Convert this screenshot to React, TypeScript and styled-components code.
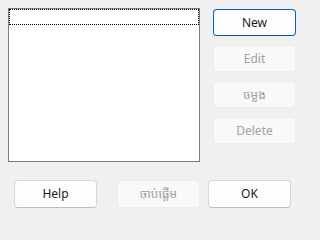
import React from 'react';
import styled, { createGlobalStyle } from 'styled-components';

const GlobalStyle = createGlobalStyle`
  html, body {
    margin: 0;
    padding: 0;
    background: #f0f0f0;
  }
`;

const Dialog = styled.div`
  width: 305px;
  height: 222px;
  box-sizing: border-box;
  padding: 8px 0 0 8px;
  background: #f0f0f0;
  font-family: "Segoe UI", "Noto Sans", "Noto Sans Khmer", "Khmer OS", sans-serif;
  font-size: 12px;
  display: flex;
  flex-direction: column;
  gap: 18px;
`;

const TopRow = styled.div`
  display: flex;
  align-items: flex-start;
  gap: 13px;
`;

const ListBox = styled.div`
  width: 192px;
  height: 154px;
  box-sizing: border-box;
  border: 1px solid #7a7a7a;
  background: #ffffff;
`;

const FocusItem = styled.div`
  height: 16px;
  box-sizing: border-box;
  border: 1px dotted #000000;
`;

const SideColumn = styled.div`
  display: flex;
  flex-direction: column;
  gap: 9px;
  padding-top: 1px;
`;

const Button = styled.button<{ $primary?: boolean; $offset?: number; $tall?: boolean }>`
  width: 83px;
  height: ${(p) => (p.$tall ? 28 : 27)}px;
  box-sizing: border-box;
  margin: 0 0 0 ${(p) => p.$offset ?? 0}px;
  padding: 0 0 1px;
  border-radius: 4px;
  font-family: inherit;
  font-size: 12px;
  color: #1a1a1a;
  background: #fdfdfd;
  border: 1px solid ${(p) => (p.$primary ? '#0067c0' : '#d5d5d5')};
  border-bottom-color: ${(p) => (p.$primary ? '#005aa8' : '#bdbdbd')};
  display: flex;
  align-items: center;
  justify-content: center;
  cursor: default;

  &:disabled {
    background: #f9f9f9;
    border-color: #ececec;
    color: #a0a0a0;
  }
`;

const BottomRow = styled.div`
  display: flex;
  padding-left: 6px;
`;

export default function App() {
  return (
    <>
      <GlobalStyle />
      <Dialog>
        <TopRow>
          <ListBox>
            <FocusItem />
          </ListBox>
          <SideColumn>
            <Button $primary>New</Button>
            <Button disabled>Edit</Button>
            <Button disabled>ចម្លង</Button>
            <Button disabled>Delete</Button>
          </SideColumn>
        </TopRow>
        <BottomRow>
          <Button $tall>Help</Button>
          <Button $tall disabled $offset={20}>ចាប់ផ្ដើម</Button>
          <Button $tall $offset={8}>OK</Button>
        </BottomRow>
      </Dialog>
    </>
  );
}
